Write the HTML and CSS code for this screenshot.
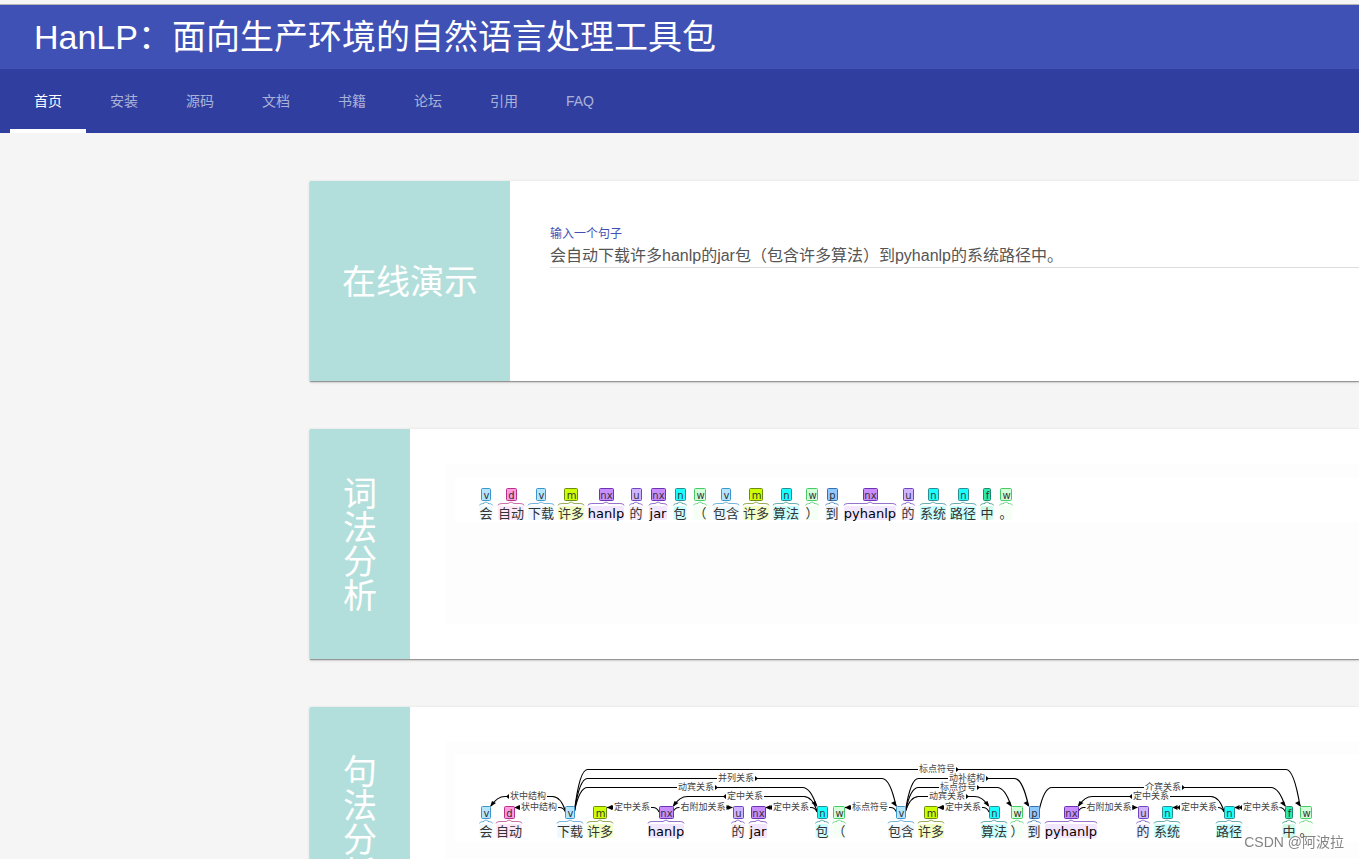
FILE: index.html
```html
<!DOCTYPE html>
<html lang="zh-CN">
<head>
<meta charset="utf-8">
<title>HanLP</title>
<link rel="stylesheet" href="styles.css">
</head>
<body>
<header class="header">
  <h1 class="header-title">HanLP：面向生产环境的自然语言处理工具包</h1>
  <nav class="tabs">
    <a class="tab tab-active" href="#home">首页</a>
    <a class="tab" href="#install">安装</a>
    <a class="tab" href="#source">源码</a>
    <a class="tab" href="#docs">文档</a>
    <a class="tab" href="#book">书籍</a>
    <a class="tab" href="#forum">论坛</a>
    <a class="tab" href="#cite">引用</a>
    <a class="tab" href="#faq">FAQ</a>
  </nav>
</header>
<main class="content">
  <section class="card card-demo">
    <h2 class="card-title card-title-wide">在线演示</h2>
    <div class="form">
      <label class="field-label" for="sentence">输入一个句子</label>
      <input class="field-input" id="sentence" type="text" value="会自动下载许多hanlp的jar包（包含许多算法）到pyhanlp的系统路径中。">
    </div>
  </section>
  <section class="card card-analysis">
    <h2 class="card-title"><span class="stacked">词法分析</span></h2>
    <div class="card-body"><div class="canvas"><svg class="graph" id="lexical" height="46"></svg></div></div>
  </section>
  <section class="card card-analysis">
    <h2 class="card-title"><span class="stacked">句法分析</span></h2>
    <div class="card-body"><div class="canvas"><svg class="graph" id="syntax" height="87"></svg></div></div>
  </section>
</main>
<div class="watermark">CSDN @阿波拉</div>
<script src="graph.js"></script>
</body>
</html>
```
FILE: styles.css
```css
* { box-sizing: border-box; }

body {
  margin: 0;
  height: 100vh;
  overflow: hidden;
  background: #f5f5f5;
  font-family: "Liberation Sans", "Noto Sans CJK SC", sans-serif;
}

h1, h2 { margin: 0; font-weight: 400; }

.header {
  margin-top: 4px;
  border-top: 1px solid #b5b5b5;
  background: #3f51b5;
  color: #fff;
}

.header-title {
  height: 64px;
  padding-left: 34px;
  font-size: 34px;
  line-height: 64px;
  white-space: nowrap;
}

.tabs {
  display: flex;
  height: 64px;
  padding-left: 10px;
  background: #303f9f;
}

.tab {
  padding: 0 24px;
  font-size: 14px;
  line-height: 64px;
  color: rgba(255, 255, 255, 0.6);
  text-decoration: none;
}

.tab-active {
  color: #fff;
  border-bottom: 4px solid #fff;
}

.content {
  display: flex;
  flex-direction: column;
  gap: 48px;
  padding: 48px 0 48px 310px;
}

.card {
  display: flex;
  background: #fff;
  box-shadow: 0 1px 1px rgba(0, 0, 0, 0.3), 0 1px 3px rgba(0, 0, 0, 0.2);
}

.card-demo { min-height: 200px; }
.card-analysis { min-height: 230px; }

.card-title {
  display: flex;
  flex: none;
  align-items: center;
  justify-content: center;
  width: 100px;
  padding-top: 2px;
  background: #b2dfdb;
  color: #fff;
  font-size: 34px;
  line-height: 34px;
}

.card-title-wide { width: 200px; }
.stacked { width: 34px; }

.form {
  flex: 1;
  padding: 44px 0 0 40px;
}

.field-label {
  display: block;
  font-size: 12px;
  line-height: 18px;
  color: #3f51b5;
}

.field-input {
  display: block;
  width: 100%;
  height: 25px;
  padding: 0 0 2px;
  border: 0;
  border-bottom: 1px solid #dcdcdc;
  outline: 0;
  background: none;
  color: #555;
  font: inherit;
  font-size: 16px;
}

.card-body {
  flex: 1;
  min-width: 0;
  padding: 35px 0 35px 35px;
}

.canvas {
  height: 160px;
  padding: 13px 0 0 10px;
  background: #fdfdfd;
}

.graph {
  display: block;
  width: 100%;
  background: #fff;
  font-family: "DejaVu Sans", "Noto Sans CJK SC", sans-serif;
}

.word { font-size: 13px; fill: #333; text-anchor: middle; }
.word-latin { fill: #000; }
.tag { font-size: 10px; fill: #333; text-anchor: middle; }
.relation { font-size: 9px; fill: #444; text-anchor: middle; }
.arc { fill: none; stroke: #000; stroke-width: 1.2; }
.head { fill: #000; }
.brace { fill: none; }

.watermark {
  position: fixed;
  right: 15px;
  bottom: 6px;
  font-size: 14px;
  line-height: 22px;
  color: rgba(90, 90, 90, 0.75);
}
```
FILE: graph.js
```js
const NS = 'http://www.w3.org/2000/svg';

// tag: [fill, border, tag box width]
const TAGS = {
  v: ['#b3e5ff', '#3c96cc', 10],
  d: ['#ff9ae0', '#b8328c', 11],
  m: ['#ccff00', '#6f8c10', 14],
  nx: ['#c98cff', '#6c34b4', 15],
  u: ['#d0b3ff', '#6f45c0', 11],
  n: ['#19ffff', '#2c8c90', 11],
  w: ['#d0ffd8', '#45cc64', 12],
  p: ['#8fc8ff', '#3272b0', 11],
  f: ['#2eeaae', '#1e8a68', 8]
};

const WORDS = [
  ['会', 'v', 13], ['自动', 'd', 26], ['下载', 'v', 26], ['许多', 'm', 26],
  ['hanlp', 'nx', 36], ['的', 'u', 13], ['jar', 'nx', 18], ['包', 'n', 13],
  ['（', 'w', 13], ['包含', 'v', 26], ['许多', 'm', 26], ['算法', 'n', 26],
  ['）', 'w', 13], ['到', 'p', 13], ['pyhanlp', 'nx', 52], ['的', 'u', 13],
  ['系统', 'n', 26], ['路径', 'n', 26], ['中', 'f', 13], ['。', 'w', 13]
];

const LEXICAL_X = [31, 56, 86, 116, 151, 181, 203, 225, 245, 271, 301, 331,
  357, 377, 415, 453, 478, 508, 532, 551];
const SYNTAX_X = [31, 54, 115, 145, 211, 283, 303, 367, 384, 446, 476, 539,
  562, 579, 616, 688, 712, 774, 834, 851];

// source word, target word, level, label, label centre
const ARCS = [
  [2, 19, 4, '标点符号', 482], [2, 9, 3, '并列关系', 281],
  [2, 7, 2, '动宾关系', 241], [7, 4, 1, '定中关系', 290],
  [2, 0, 1, '状中结构', 73], [2, 1, 0, '状中结构', 84],
  [4, 3, 0, '定中关系', 177], [4, 5, 0, '右附加关系', 248],
  [7, 6, 0, '定中关系', 336], [9, 8, 0, '标点符号', 415],
  [9, 13, 3, '动补结构', 512], [9, 12, 2, '标点符号', 503],
  [9, 11, 1, '动宾关系', 492], [11, 10, 0, '定中关系', 508],
  [13, 18, 2, '介宾关系', 708], [17, 14, 1, '定中关系', 696],
  [14, 15, 0, '右附加关系', 654], [17, 16, 0, '定中关系', 744],
  [18, 17, 0, '定中关系', 806]
];

function add(svg, name, attrs, text) {
  const el = document.createElementNS(NS, name);
  for (const key in attrs) el.setAttribute(key, attrs[key]);
  if (text) el.textContent = text;
  svg.appendChild(el);
}

function drawWords(svg, xs, top) {
  WORDS.forEach(([word, tag, width], i) => {
    const x = xs[i];
    const [fill, border, tagWidth] = TAGS[tag];
    const left = x - width / 2;
    const right = x + width / 2;
    add(svg, 'rect', { x: left, y: top + 18, width, height: 14, rx: 2, fill, 'fill-opacity': 0.22 });
    add(svg, 'rect', { x: Math.round(x - tagWidth / 2) + 0.5, y: top + 0.5, width: tagWidth - 1, height: 12, rx: 1, fill, stroke: border });
    add(svg, 'text', { x: x + 0.5, y: top + 11, class: 'tag' }, tag);
    add(svg, 'path', {
      class: 'brace', stroke: border, 'stroke-opacity': 0.7,
      d: `M${left} ${top + 17.5}Q${left} ${top + 15.5} ${left + 4} ${top + 15.5}H${x - 3}L${x} ${top + 14}L${x + 3} ${top + 15.5}H${right - 4}Q${right} ${top + 15.5} ${right} ${top + 17.5}`
    });
    add(svg, 'text', { x, y: top + 30, class: /[a-z]/.test(word) ? 'word word-latin' : 'word' }, word);
  });
}

function drawArcs(svg, xs, top) {
  ARCS.forEach(([from, to, level, label, cx]) => {
    const dir = to > from ? 1 : -1;
    const start = xs[from] + dir * (TAGS[WORDS[from][1]][2] / 2 - 0.5);
    const end = xs[to] - dir * TAGS[WORDS[to][1]][2] / 2;
    const y = level ? top - 0.5 - level * 9 : top + 1.5;
    const half = label.length * 4.5 + 1;
    if (level) {
      const a = start + dir * 13;
      const b = end - dir * 14;
      add(svg, 'path', { class: 'arc', d: `M${start} ${top + 5}Q${start + dir * 5} ${y} ${a} ${y}H${cx - dir * half}` });
      add(svg, 'path', { class: 'arc', d: `M${cx + dir * half} ${y}H${b}Q${end - dir * 6} ${y} ${end} ${top}` });
      add(svg, 'path', { class: 'head', d: `M${end + dir} ${top + 1}l${-dir * 6} -4l${dir * 4} -2z` });
    } else {
      add(svg, 'path', { class: 'arc', d: `M${start} ${top + 6}Q${start + dir * 2} ${y} ${start + dir * 6} ${y}H${cx - dir * half}` });
      add(svg, 'path', { class: 'arc', d: `M${cx + dir * half} ${y}H${end}` });
      add(svg, 'path', { class: 'head', d: `M${end} ${y}l${-dir * 5} -2.5v5z` });
    }
    const tip = cx + dir * (half + 3);
    add(svg, 'path', { class: 'head', d: `M${tip} ${y}l${-dir * 3} -2.5v5z` });
    add(svg, 'text', { x: cx, y: y + 2.5, class: 'relation' }, label);
  });
}

drawWords(document.getElementById('lexical'), LEXICAL_X, 11);
drawArcs(document.getElementById('syntax'), SYNTAX_X, 51);
drawWords(document.getElementById('syntax'), SYNTAX_X, 51);
```
